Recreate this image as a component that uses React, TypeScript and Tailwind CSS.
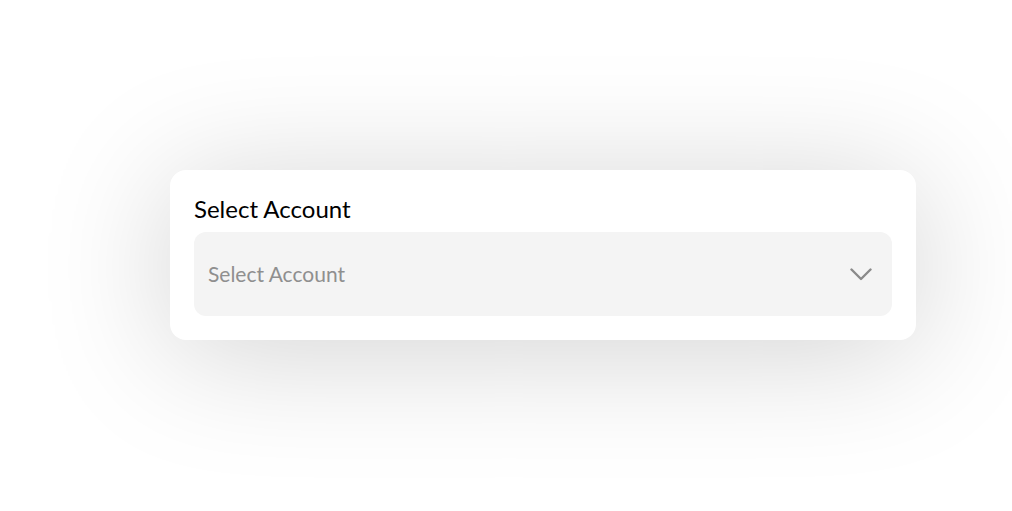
import React from "react";

const ChevronDown: React.FC = () => (
  <svg width="22" height="13" viewBox="0 0 22 13" fill="none" aria-hidden="true">
    <path d="M1.5 1.5l9.5 9.5 9.5-9.5" stroke="#8a8a8a" strokeWidth="2.4" strokeLinecap="round" strokeLinejoin="round" />
  </svg>
);

const App: React.FC = () => {
  return (
    <div className="min-h-[511px] w-full bg-white pl-[170px] pt-[170px]" style={{ fontFamily: "Lato, 'Noto Sans', sans-serif" }}>
      <div className="w-[746px] rounded-2xl bg-white px-6 pt-6 pb-6 shadow-[0_12px_130px_rgba(0,0,0,0.18)]">
        <label className="block text-[24px] leading-[30px] text-black mb-2" htmlFor="account">
          Select Account
        </label>
        <button
          id="account"
          type="button"
          className="flex h-[84px] w-full items-center justify-between rounded-xl bg-[#f4f4f4] pl-[14px] pr-5 text-left"
        >
          <span className="text-[21px] text-[#8f8f8f]">Select Account</span>
          <ChevronDown />
        </button>
      </div>
    </div>
  );
};

export default App;
